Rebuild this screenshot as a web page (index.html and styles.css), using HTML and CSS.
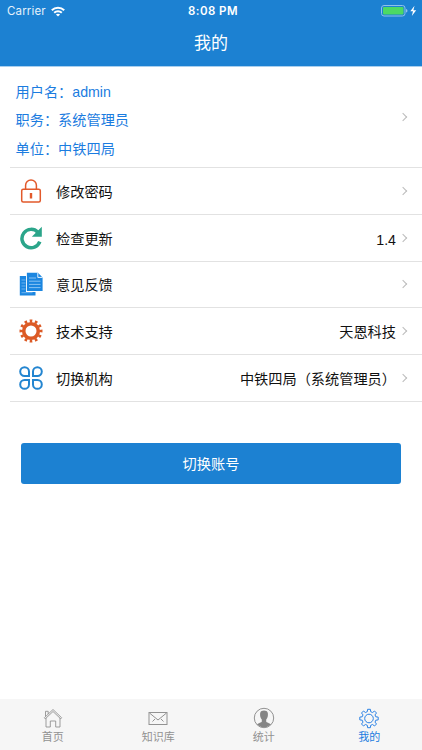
FILE: index.html
```
<!DOCTYPE html>
<html lang="zh-CN">

<head>
    <meta charset="UTF-8">
    <meta name="viewport" content="width=device-width, initial-scale=1.0">
    <title>我的</title>
    <link rel="stylesheet" href="styles.css">
</head>

<body>
    <div class="header">
        <div class="status-bar">
            <div class="carrier">
                <span>Carrier</span>
                <svg width="14" height="11" viewBox="0 0 14 11" fill="none" stroke="#fff" stroke-width="2">
                    <path d="M.8 4.2C4.3.8 9.7.8 13.2 4.2" />
                    <path d="M3.2 6.8C5.3 4.8 8.7 4.8 10.8 6.8" />
                    <path d="M4.9 8.5C6.1 7.4 7.9 7.4 9.1 8.5L7 10.6z" fill="#fff" stroke="none" />
                </svg>
            </div>
            <div class="time">8:08 PM</div>
            <div class="battery">
                <svg width="37" height="12" viewBox="0 0 37 12">
                    <rect x="1.5" y=".5" width="23.5" height="10.5" rx="2.5" fill="none" stroke="#8fc1ea" />
                    <rect x="3" y="2" width="20.5" height="7.5" rx="1" fill="#4cd964" />
                    <path d="M26 4q1.500.3 1.5 1.8T26 7.5z" fill="#8fc1ea" />
                    <path d="M34.500.8L30.3 6.3H33L31.8 11 36.2 5.2H33.4z" fill="#fff" />
                </svg>
            </div>
        </div>
        <div class="title">我的</div>
    </div>

    <div class="list">
        <div class="profile">
            <div class="profile-info">
                <div>用户名：admin</div>
                <div>职务：系统管理员</div>
                <div>单位：中铁四局</div>
            </div>
            <span class="arrow"></span>
        </div>
        <div class="row">
            <svg class="icon" viewBox="0 0 24 24" fill="none" stroke="#e2592b" stroke-width="1.5">
                <rect x="2.7" y="10.2" width="18.6" height="12.7" rx="1.5" />
                <path d="M6.6 10V6.3a5.4 5.4 0 0 1 10.8 0V10" />
                <path d="M12 14v5.5" stroke-width="2.4" />
            </svg>
            <span class="label">修改密码</span>
            <span class="arrow"></span>
        </div>
        <div class="row">
            <svg class="icon" viewBox="0 0 24 24">
                <path d="M18.8 6.2A9.2 9.2 0 1 0 20.8 15.7" fill="none" stroke="#2ba58a" stroke-width="3.5" />
                <path d="M22.800.8V10.7H12.8z" fill="#2ba58a" />
            </svg>
            <span class="label">检查更新</span>
            <span class="value version">1.4</span>
            <span class="arrow"></span>
        </div>
        <div class="row">
            <svg class="icon" viewBox="0 0 24 24">
                <path d="M.8 4H7V20H16.5V23.5H.8z" fill="#1b86e0" />
                <path d="M2.5 8h4M2.5 11h4M2.5 14h4M2.5 17h4M2.5 20.7h11" stroke="#8fc6f5" stroke-width=".7" />
                <path d="M7.900.8H19L23.6 5.4V19H7.9z" fill="#1b86e0" />
                <path d="M18.800.8V5.4H23.6" fill="none" stroke="#fff" stroke-width=".9" />
                <path d="M10 6h7M10 9.2h11.5M10 12.4h11.5M10 15.6h11.5" stroke="#a5d2f8" stroke-width=".8" />
            </svg>
            <span class="label">意见反馈</span>
            <span class="arrow"></span>
        </div>
        <div class="row">
            <svg class="icon" viewBox="0 0 24 24" fill="none" stroke="#dc5a25">
                <circle cx="12" cy="12" r="7.3" stroke-width="3.6" />
                <circle cx="12" cy="12" r="10" stroke-width="3" pathLength="120" stroke-dasharray="5 5" stroke-dashoffset="2.5" />
            </svg>
            <span class="label">技术支持</span>
            <span class="value">天恩科技</span>
            <span class="arrow"></span>
        </div>
        <div class="row">
            <svg class="icon" viewBox="0 0 24 24" fill="none" stroke="#2385d0" stroke-width="2">
                <path d="M10 10H5.6A4.4 4.4 0 1 1 10 5.6z" />
                <path d="M14 10V5.6A4.4 4.4 0 1 1 18.4 10z" />
                <path d="M10 14V18.4A4.4 4.4 0 1 1 5.6 14z" />
                <path d="M14 14H18.4A4.4 4.4 0 1 1 14 18.4z" />
            </svg>
            <span class="label">切换机构</span>
            <span class="value">中铁四局（系统管理员）</span>
            <span class="arrow"></span>
        </div>
    </div>

    <button class="btn">切换账号</button>

    <div class="tab-bar">
        <div class="tab">
            <svg width="22" height="22" viewBox="0 0 22 22" fill="none" stroke="#929292" stroke-width=".9">
                <path d="M2.3 10.8L11 2.5 19.7 10.8 18.7 11.8 11 4.5 3.3 11.8z" />
                <path d="M4 11V20H8.3V14H13.7V20H18V11M3.5 9.5V4.3H6.2V7" />
            </svg>
            <span>首页</span>
        </div>
        <div class="tab">
            <svg width="22" height="22" viewBox="0 0 22 22" fill="none" stroke="#929292">
                <rect x="2" y="5.5" width="18" height="12" />
                <path d="M2.5 6L11 13 19.5 6M5.5 14.5L8 12M16.5 14.5L14 12" />
            </svg>
            <span>知识库</span>
        </div>
        <div class="tab">
            <svg width="22" height="22" viewBox="0 0 22 22">
                <circle cx="11" cy="11" r="9.7" fill="none" stroke="#929292" />
                <path d="M4 17.5C5.5 15.8 8.5 15.8 8.8 14.5V12.5C7.3 11 6.8 8 7.2 6 7.8 2.8 14.2 2.8 14.8 6 15.2 8 14.7 11 13.2 12.5V14.5C13.5 15.8 16.5 15.8 18 17.5Q11 23 4 17.5z" fill="#858585" />
            </svg>
            <span>统计</span>
        </div>
        <div class="tab active">
            <svg width="22" height="22" viewBox="-11 -11.5 22 22" fill="none" stroke="#2b82e6" stroke-linejoin="round">
                <path d="M6.8-1.7L9.2-1.4V1.4L6.8 1.7 6 3.6 7.5 5.5 5.5 7.5 3.6 6 1.7 6.8 1.4 9.2H-1.4L-1.7 6.8-3.6 6-5.5 7.5-7.5 5.5-6 3.6-6.8 1.7-9.2 1.4V-1.4L-6.8-1.7-6-3.6-7.5-5.5-5.5-7.5-3.6-6-1.7-6.8-1.4-9.2H1.4L1.7-6.8 3.6-6 5.5-7.5 7.5-5.5 6-3.6z" />
                <circle r="4.3" />
            </svg>
            <span>我的</span>
        </div>
    </div>
</body>

</html>
```
FILE: styles.css
```
* {
    box-sizing: border-box;
}

body {
    display: flex;
    flex-direction: column;
    height: 750px;
    margin: 0;
    background-color: #fff;
    color: #111;
    font-family: "Liberation Sans", "Noto Sans CJK SC", sans-serif;
    font-size: 14.2px;
}

svg {
    display: block;
}

.header {
    height: 67px;
    border-bottom: 1px solid #a9cfee;
    background-color: #1c81d2;
    color: #fff;
}

.status-bar {
    display: grid;
    grid-template-columns: 1fr 1fr 1fr;
    align-items: center;
    height: 22px;
    padding: 0 5px 0 7px;
    font-family: Inter, sans-serif;
    font-size: 11.5px;
}

.carrier {
    display: flex;
    align-items: center;
    gap: 5px;
    color: #e4f1fb;
    letter-spacing: 0.15px;
}

.time {
    padding-left: 2px;
    text-align: center;
    font-weight: 600;
    letter-spacing: 0.45px;
}

.battery {
    display: flex;
    justify-content: flex-end;
}

.title {
    line-height: 43px;
    text-align: center;
    font-size: 17px;
}

.list {
    padding-left: 10px;
}

.profile,
.row {
    display: flex;
    align-items: center;
    padding-right: 16px;
    border-bottom: 1px solid #e2e2e2;
}

.profile {
    height: 101px;
    padding-left: 5.5px;
}

.profile-info {
    flex: 1;
    padding-top: 7px;
    color: #1b7ce0;
    line-height: 28.5px;
}

.row {
    height: 46.8px;
    padding-left: 9px;
}

.icon {
    width: 24px;
    height: 24px;
}

.label {
    flex: 1;
    margin-left: 13px;
}

.value {
    margin-right: 4px;
}

.version {
    padding-top: 4px;
}

.arrow {
    width: 6px;
    height: 6px;
    border-top: 1px solid #bbb;
    border-right: 1px solid #bbb;
    transform: rotate(45deg);
}

.btn {
    height: 41px;
    margin: 41px 21px 0;
    border: none;
    border-radius: 3px;
    background-color: #1c81d2;
    color: #fff;
    font-family: inherit;
    font-size: 14.2px;
}

.tab-bar {
    display: flex;
    height: 51px;
    margin-top: auto;
    background-color: #f6f6f6;
}

.tab {
    display: flex;
    flex: 1;
    flex-direction: column;
    align-items: center;
    padding-top: 8px;
    color: #929292;
    font-size: 11px;
    line-height: 16px;
}

.active {
    color: #1b7ce0;
}
```
